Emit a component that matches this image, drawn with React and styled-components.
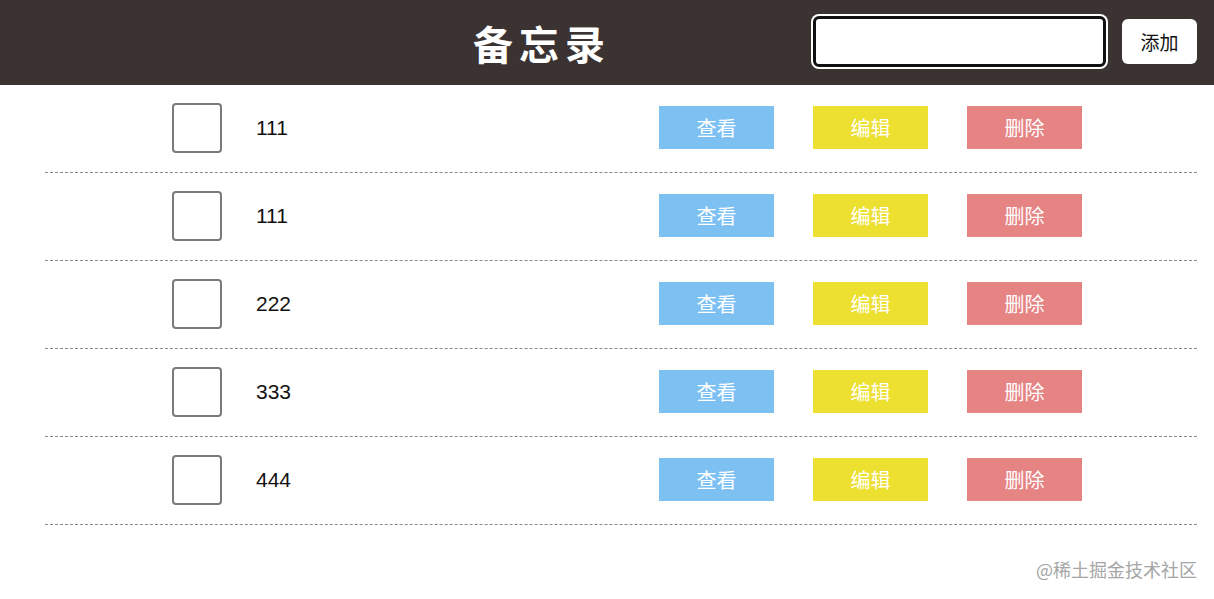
import React, {useState} from "react";
import styled, {createGlobalStyle} from "styled-components";

const GlobalStyle = createGlobalStyle`
  body {
    margin: 0;
    background: #fff;
    font-family: "Microsoft YaHei", "Noto Sans CJK SC", "Liberation Sans", sans-serif;
  }
`

const todosData = [
  {id: 1, title: "111"},
  {id: 2, title: "111"},
  {id: 3, title: "222"},
  {id: 4, title: "333"},
  {id: 5, title: "444"},
]

const App = () => {
  const [todos] = useState(todosData)
  const [text, setText] = useState("")
  return (
    <Page>
      <GlobalStyle/>
      <Header>
        <Title>备忘录</Title>
        <AddBox>
          <Input value={text} onChange={(e) => setText(e.target.value)}/>
          <AddButton>添加</AddButton>
        </AddBox>
      </Header>
      <List>
        {todos.map((todo) => (
          <Row key={todo.id}>
            <Check/>
            <Text>{todo.title}</Text>
            <Actions>
              <ActionButton color="#7dc1f3">查看</ActionButton>
              <ActionButton color="#ede031">编辑</ActionButton>
              <ActionButton color="#e68484">删除</ActionButton>
            </Actions>
          </Row>
        ))}
      </List>
      <Footer>@稀土掘金技术社区</Footer>
    </Page>
  )
}

const Page = styled.div`
  width: 1214px;
  height: 599px;
  overflow: hidden;
`

const Header = styled.div`
  height: 85px;
  background: #3a3332;
  display: flex;
  align-items: center;
  justify-content: center;
  position: relative;
`

const Title = styled.h1`
  margin: 0 0 0 -130px;
  color: #fff;
  font-size: 40px;
  font-weight: bold;
  letter-spacing: 6px;
  font-family: "Noto Sans CJK SC", sans-serif;
`

const AddBox = styled.div`
  position: absolute;
  right: 17px;
  top: 14px;
  display: flex;
  align-items: center;
  gap: 14px;
`

const Input = styled.input`
  box-sizing: border-box;
  width: 293px;
  height: 51px;
  margin: 2px;
  border: 3px solid #111;
  border-radius: 6px;
  box-shadow: 0 0 0 2px #fff;
  outline: none;
  background: #fff;
  font-size: 18px;
  padding: 0 10px;
`

const AddButton = styled.button`
  width: 75px;
  height: 45px;
  border: none;
  border-radius: 6px;
  background: #fff;
  color: #111;
  font-size: 19px;
  font-family: "Noto Sans CJK SC", sans-serif;
  padding: 0;
`

const List = styled.div`
  margin-left: 45px;
  width: 1152px;
`

const Row = styled.div`
  height: 85px;
  padding-bottom: 2px;
  border-bottom: 1px dashed #8a8a8a;
  display: flex;
  align-items: center;
`

const Check = styled.div`
  box-sizing: border-box;
  width: 50px;
  height: 50px;
  margin-left: 127px;
  border: 2px solid #7a7a7a;
  border-radius: 4px;
`

const Text = styled.span`
  margin-left: 34px;
  width: 403px;
  font-size: 21px;
  color: #111;
  font-family: "Liberation Sans", sans-serif;
`

const Actions = styled.div`
  display: flex;
  gap: 39px;
`

const ActionButton = styled.div`
  width: 115px;
  height: 43px;
  background: ${props => props.color};
  color: #fff;
  font-size: 20px;
  display: flex;
  align-items: center;
  justify-content: center;
  font-family: "Noto Sans CJK SC", sans-serif;
`

const Footer = styled.div`
  margin-top: 31px;
  padding-right: 17px;
  text-align: right;
  color: #a5a5a5;
  font-size: 18px;
  font-family: "Noto Sans CJK SC", sans-serif;
`

export default App
